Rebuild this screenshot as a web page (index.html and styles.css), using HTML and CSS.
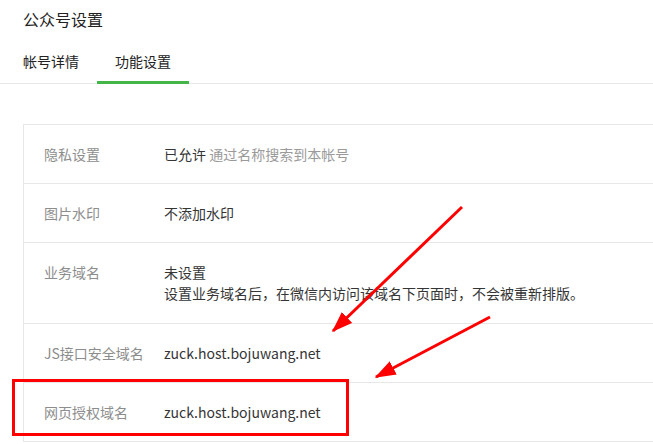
FILE: index.html
```html
<!DOCTYPE html>
<html lang="zh-CN">
<head>
    <meta charset="UTF-8">
    <title>公众号设置</title>
    <link rel="stylesheet" href="styles.css">
</head>
<body>
    <div class="page">
        <h2 class="page-title">公众号设置</h2>

        <div class="tabs">
            <a class="tab">帐号详情</a>
            <a class="tab active">功能设置</a>
        </div>

        <div class="setting-table">
            <div class="row">
                <div class="label">隐私设置</div>
                <div class="value">已允许 <span class="hint">通过名称搜索到本帐号</span></div>
            </div>
            <div class="row">
                <div class="label">图片水印</div>
                <div class="value">不添加水印</div>
            </div>
            <div class="row tall">
                <div class="label">业务域名</div>
                <div class="value">
                    <p>未设置</p>
                    <p>设置业务域名后，在微信内访问该域名下页面时，不会被重新排版。</p>
                </div>
            </div>
            <div class="row">
                <div class="label">JS接口安全域名</div>
                <div class="value">zuck.host.bojuwang.net</div>
            </div>
            <div class="row">
                <div class="label">网页授权域名</div>
                <div class="value">zuck.host.bojuwang.net</div>
            </div>
        </div>
    </div>

    <!-- 标注：红框和箭头 -->
    <div class="mark-box"></div>
    <svg class="marks" width="653" height="444" viewBox="0 0 653 444">
        <defs>
            <marker id="head" markerWidth="7" markerHeight="5" refX="6.5" refY="2.5" orient="auto" markerUnits="strokeWidth">
                <path d="M0,0 L7,2.5 L0,5 Z" fill="#f00"/>
            </marker>
        </defs>
        <line x1="462" y1="207" x2="333" y2="331" stroke="#f00" stroke-width="3" marker-end="url(#head)"/>
        <line x1="490" y1="317" x2="376" y2="377" stroke="#f00" stroke-width="3" marker-end="url(#head)"/>
    </svg>
</body>
</html>
```

FILE: styles.css
```css
body {
    margin: 0;
    font-family: "Noto Sans CJK SC", "Noto Sans", sans-serif;
    font-size: 14px;
    color: #353535;
    background-color: #fff;
    overflow: hidden;
}
.page-title {
    margin: 0;
    padding: 8px 0 0 23px;
    font-size: 16px;
    font-weight: normal;
    line-height: 22px;
    color: #222;
}
.tabs {
    display: flex;
    margin-top: 20px;
    padding-left: 5px;
    border-bottom: 1px solid #e7e7e7;
    height: 33px;
}
.tab {
    display: block;
    width: 92px;
    text-align: center;
    line-height: 20px;
    padding-top: 1px;
    color: #222;
}
.tab:first-child {
    width: 74px;
    padding-left: 18px;
    text-align: left;
}
.tab.active {
    height: 30px;
    border-bottom: 3px solid #44b549;
}
.setting-table {
    margin: 40px 0 0 23px;
    border: 1px solid #e7e7e7;
    border-right: none;
}
.row {
    display: flex;
    border-bottom: 1px solid #e7e7e7;
    padding: 19px 0 18px;
    line-height: 21px;
}
.row.tall {
    padding-bottom: 19px;
}
.row:last-child {
    border-bottom: none;
}
.label {
    width: 120px;
    padding-left: 20px;
    color: #8d8d8d;
}
.value p {
    margin: 0;
}
.hint {
    color: #9a9a9a;
}
.mark-box {
    position: absolute;
    left: 12px;
    top: 379px;
    width: 331px;
    height: 51px;
    border: 3px solid #f00;
}
.marks {
    position: absolute;
    left: 0;
    top: 0;
    pointer-events: none;
}
```
